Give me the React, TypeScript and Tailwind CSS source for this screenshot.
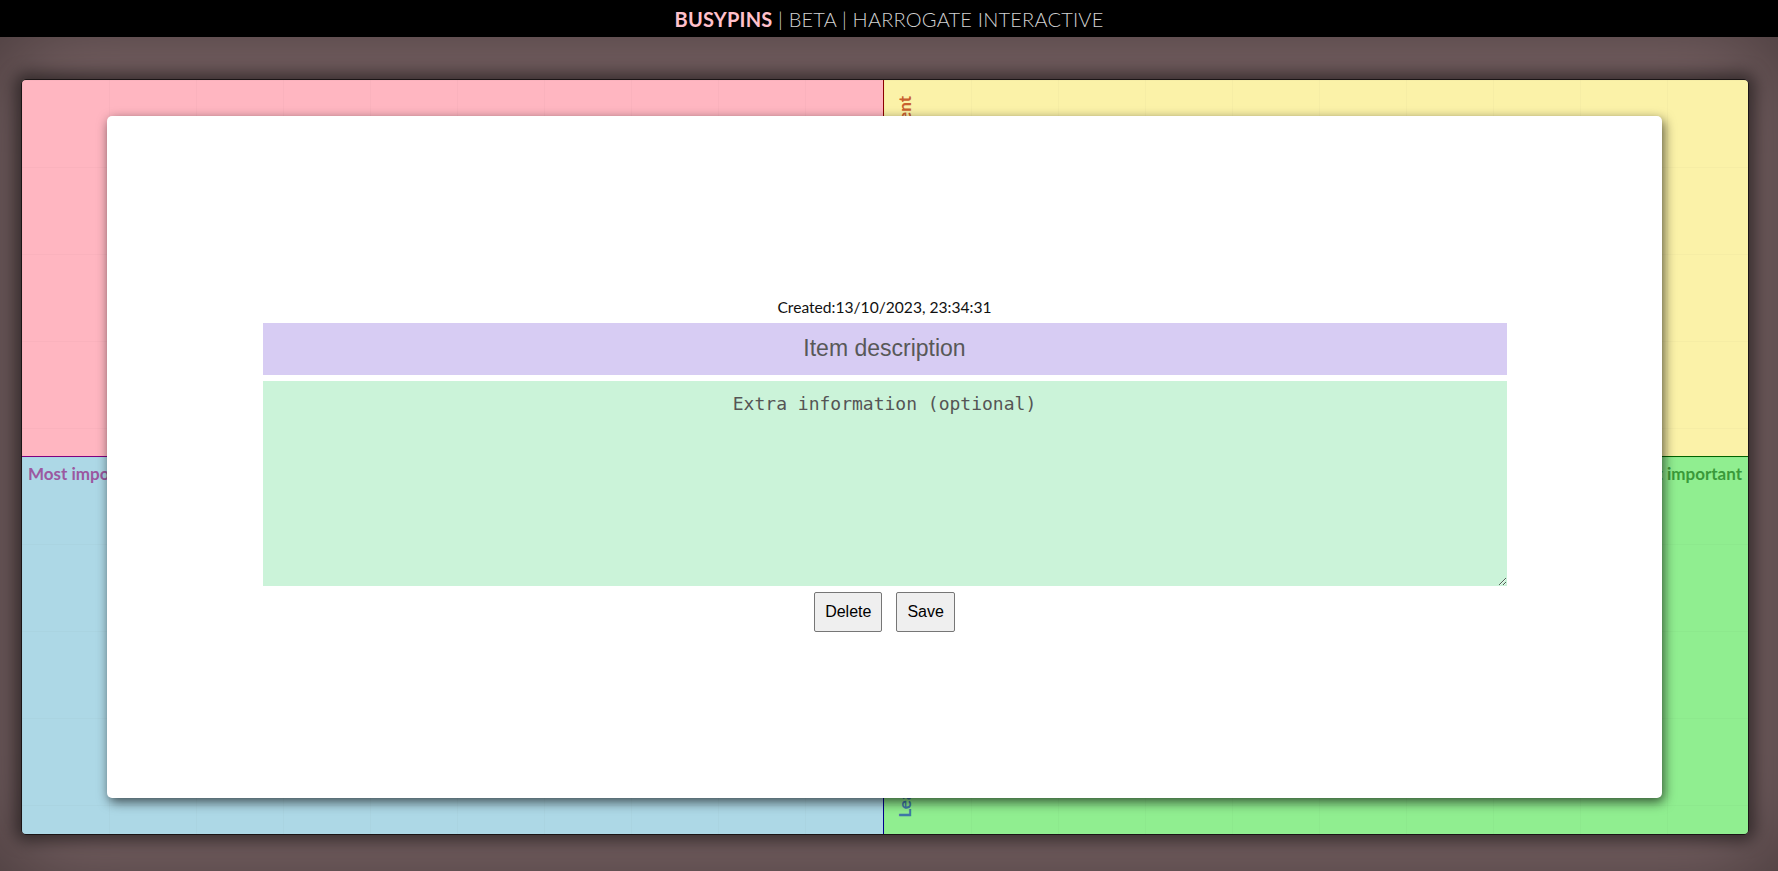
import React from "react";

const grid =
  "bg-[linear-gradient(to_right,rgba(0,0,0,0.018)_1px,transparent_1px),linear-gradient(to_bottom,rgba(0,0,0,0.018)_1px,transparent_1px)] [background-size:87px_87px]";

export default function App() {
  return (
    <div className="w-full h-[871px] flex flex-col overflow-hidden font-['Lato','Open_Sans',sans-serif]">
      <header className="h-[37px] shrink-0 bg-black flex items-center justify-center text-[20px] leading-none tracking-[0.2px]">
        <span className="font-bold text-[#ffc0cb]">BUSYPINS</span>
        <span className="font-light text-[#d2d2d2]">&nbsp;|&nbsp;BETA&nbsp;|&nbsp;HARROGATE INTERACTIVE</span>
      </header>
      <main className="flex-1 bg-[#7e6769] shadow-[inset_0_0_100px_rgba(0,0,0,0.45)] pt-[42px] pl-[21px]">
        <div className="relative w-[1728px] h-[756px] rounded-[5px] border border-[#1b1516] shadow-[0_0_16px_6px_rgba(0,0,0,0.5)] grid grid-cols-[862px_1fr] grid-rows-[377px_1fr] overflow-hidden">
          <div className={`relative bg-[#ffb6c1] border-r border-b border-r-[#8b0000] border-b-[#800080] ${grid}`} />
          <div className={`relative bg-[#fbf2a8] border-b border-b-[#006400] ${grid}`}>
            <div className="absolute left-[11px] top-[16px] [writing-mode:vertical-rl] rotate-180 text-[17px] font-bold text-[#c8602f] leading-[19px]">
              Most urgent
            </div>
          </div>
          <div className={`relative bg-[#add8e6] border-r border-r-[#00008b] ${grid}`}>
            <div className="absolute left-[6px] top-[7px] text-[17px] font-bold text-[#9b58a0] leading-[20px]">
              Most important
            </div>
          </div>
          <div className={`relative bg-[#90ee90] ${grid}`}>
            <div className="absolute right-[6px] top-[7px] text-[17px] font-bold text-[#3a9a3a] leading-[20px]">
              Least important
            </div>
            <div className="absolute left-[11px] bottom-[16px] [writing-mode:vertical-rl] rotate-180 text-[17px] font-bold text-[#3f78a8] leading-[19px]">
              Least urgent
            </div>
          </div>

          <div className="absolute left-[85px] top-[36px] w-[1555px] h-[682px] bg-white rounded-[5px] shadow-[2px_4px_12px_rgba(0,0,0,0.65)] flex flex-col items-center justify-center pt-[15px]">
            <div className="text-[15.6px] leading-[19px] text-[#111] mb-[6px]">
              Created:13/10/2023, 23:34:31
            </div>
            <input
              type="text"
              placeholder="Item description"
              className="w-[1244px] h-[52px] bg-[#d7ccf3] border-0 outline-none text-center text-[23px] font-['Liberation_Sans',Arial,sans-serif] placeholder:text-[#585858] text-[#333]"
            />
            <textarea
              placeholder="Extra information (optional)"
              className="w-[1244px] h-[205px] mt-[6px] bg-[#cbf3d9] border-0 outline-none text-center text-[18px] leading-[21px] pt-[12px] font-['DejaVu_Sans_Mono',monospace] placeholder:text-[#555] text-[#333]"
            />
            <div className="flex gap-[14px] mt-[6px]">
              <button className="h-[40px] px-[10px] bg-[#efefef] border border-[#767676] rounded-[2px] text-[16px] text-black font-['Liberation_Sans',Arial,sans-serif]">
                Delete
              </button>
              <button className="h-[40px] px-[10px] bg-[#efefef] border border-[#767676] rounded-[2px] text-[16px] text-black font-['Liberation_Sans',Arial,sans-serif]">
                Save
              </button>
            </div>
          </div>
        </div>
      </main>
    </div>
  );
}
